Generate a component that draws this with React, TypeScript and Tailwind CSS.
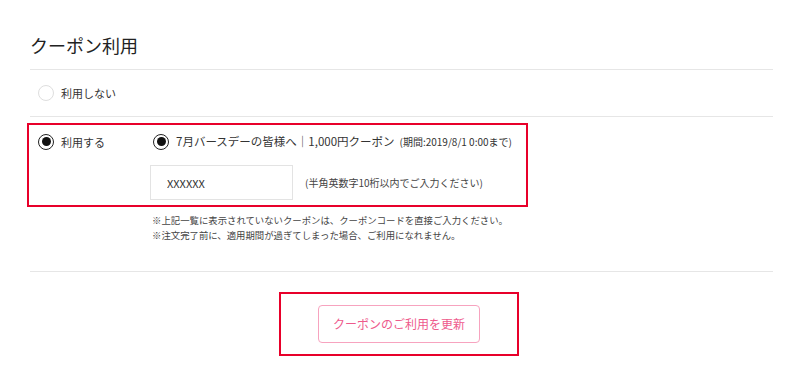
import type { ReactNode } from 'react'

const font = { fontFamily: '"Noto Sans CJK JP", "Noto Sans", sans-serif' }

function Radio({ checked }: { checked?: boolean }) {
  if (checked) {
    return (
      <span className="flex h-[16px] w-[16px] shrink-0 items-center justify-center rounded-full border-[1.5px] border-[#222]">
        <span className="h-[9px] w-[9px] rounded-full bg-[#111]" />
      </span>
    )
  }
  return <span className="h-[16px] w-[16px] shrink-0 rounded-full border-[1.5px] border-[#dedede]" />
}

function Divider({ className = '' }: { className?: string }) {
  return <div className={`h-px bg-[#e6e6e6] ${className}`} />
}

function RadioLabel({ checked, children }: { checked?: boolean; children: ReactNode }) {
  return (
    <label className="flex items-center gap-[7px]">
      <Radio checked={checked} />
      <span className="text-[11px] leading-[16px] text-[#333]">{children}</span>
    </label>
  )
}

export default function App() {
  return (
    <div className="h-[390px] w-[800px] overflow-hidden bg-white pl-[30px] pr-[27px]" style={font}>
      <h1 className="pt-[33px] pb-[12px] text-[18px] font-normal leading-[24px] text-[#222]">
        クーポン利用
      </h1>
      <Divider />

      <div className="flex h-[46px] items-center pl-[8px]">
        <RadioLabel>利用しない</RadioLabel>
      </div>
      <Divider />

      {/* selected coupon block */}
      <div className="-ml-[3px] mt-[6px] h-[84px] w-[501px] border-2 border-[#e8002a] pt-[8px] pl-[9px]">
        <div className="flex items-center">
          <div className="w-[115px]">
            <RadioLabel checked>利用する</RadioLabel>
          </div>
          <label className="flex items-center gap-[7px]">
            <Radio checked />
            <span className="whitespace-nowrap text-[11.5px] leading-[16px] text-[#333]">
              7月バースデーの皆様へ｜1,000円クーポン
              <span className="ml-[5px] text-[10px]">(期間:2019/8/1 0:00まで)</span>
            </span>
          </label>
        </div>
        <div className="mt-[15px] ml-[112px] flex items-center">
          <input
            type="text"
            defaultValue="XXXXXX"
            className="h-[35px] w-[143px] border border-[#e3e3e3] bg-white pl-[16px] text-[11px] text-[#333] outline-none"
            style={font}
          />
          <span className="ml-[12px] whitespace-nowrap text-[10px] text-[#444]">
            (半角英数字10桁以内でご入力ください)
          </span>
        </div>
      </div>

      <div className="mt-[6px] ml-[122px] text-[9.4px] leading-[15px] text-[#444]">
        <p>※上記一覧に表示されていないクーポンは、クーポンコードを直接ご入力ください。</p>
        <p>※注文完了前に、適用期間が過ぎてしまった場合、ご利用になれません。</p>
      </div>

      <Divider className="mt-[28px]" />

      <div className="ml-[249px] mt-[20px] flex h-[64px] w-[240px] items-center justify-center border-2 border-[#e8002a]">
        <button
          type="button"
          className="h-[38px] w-[162px] rounded-[4px] border border-[#f7a3bf] bg-white text-[12px] text-[#ee5a8c]"
          style={font}
        >
          クーポンのご利用を更新
        </button>
      </div>
    </div>
  )
}
